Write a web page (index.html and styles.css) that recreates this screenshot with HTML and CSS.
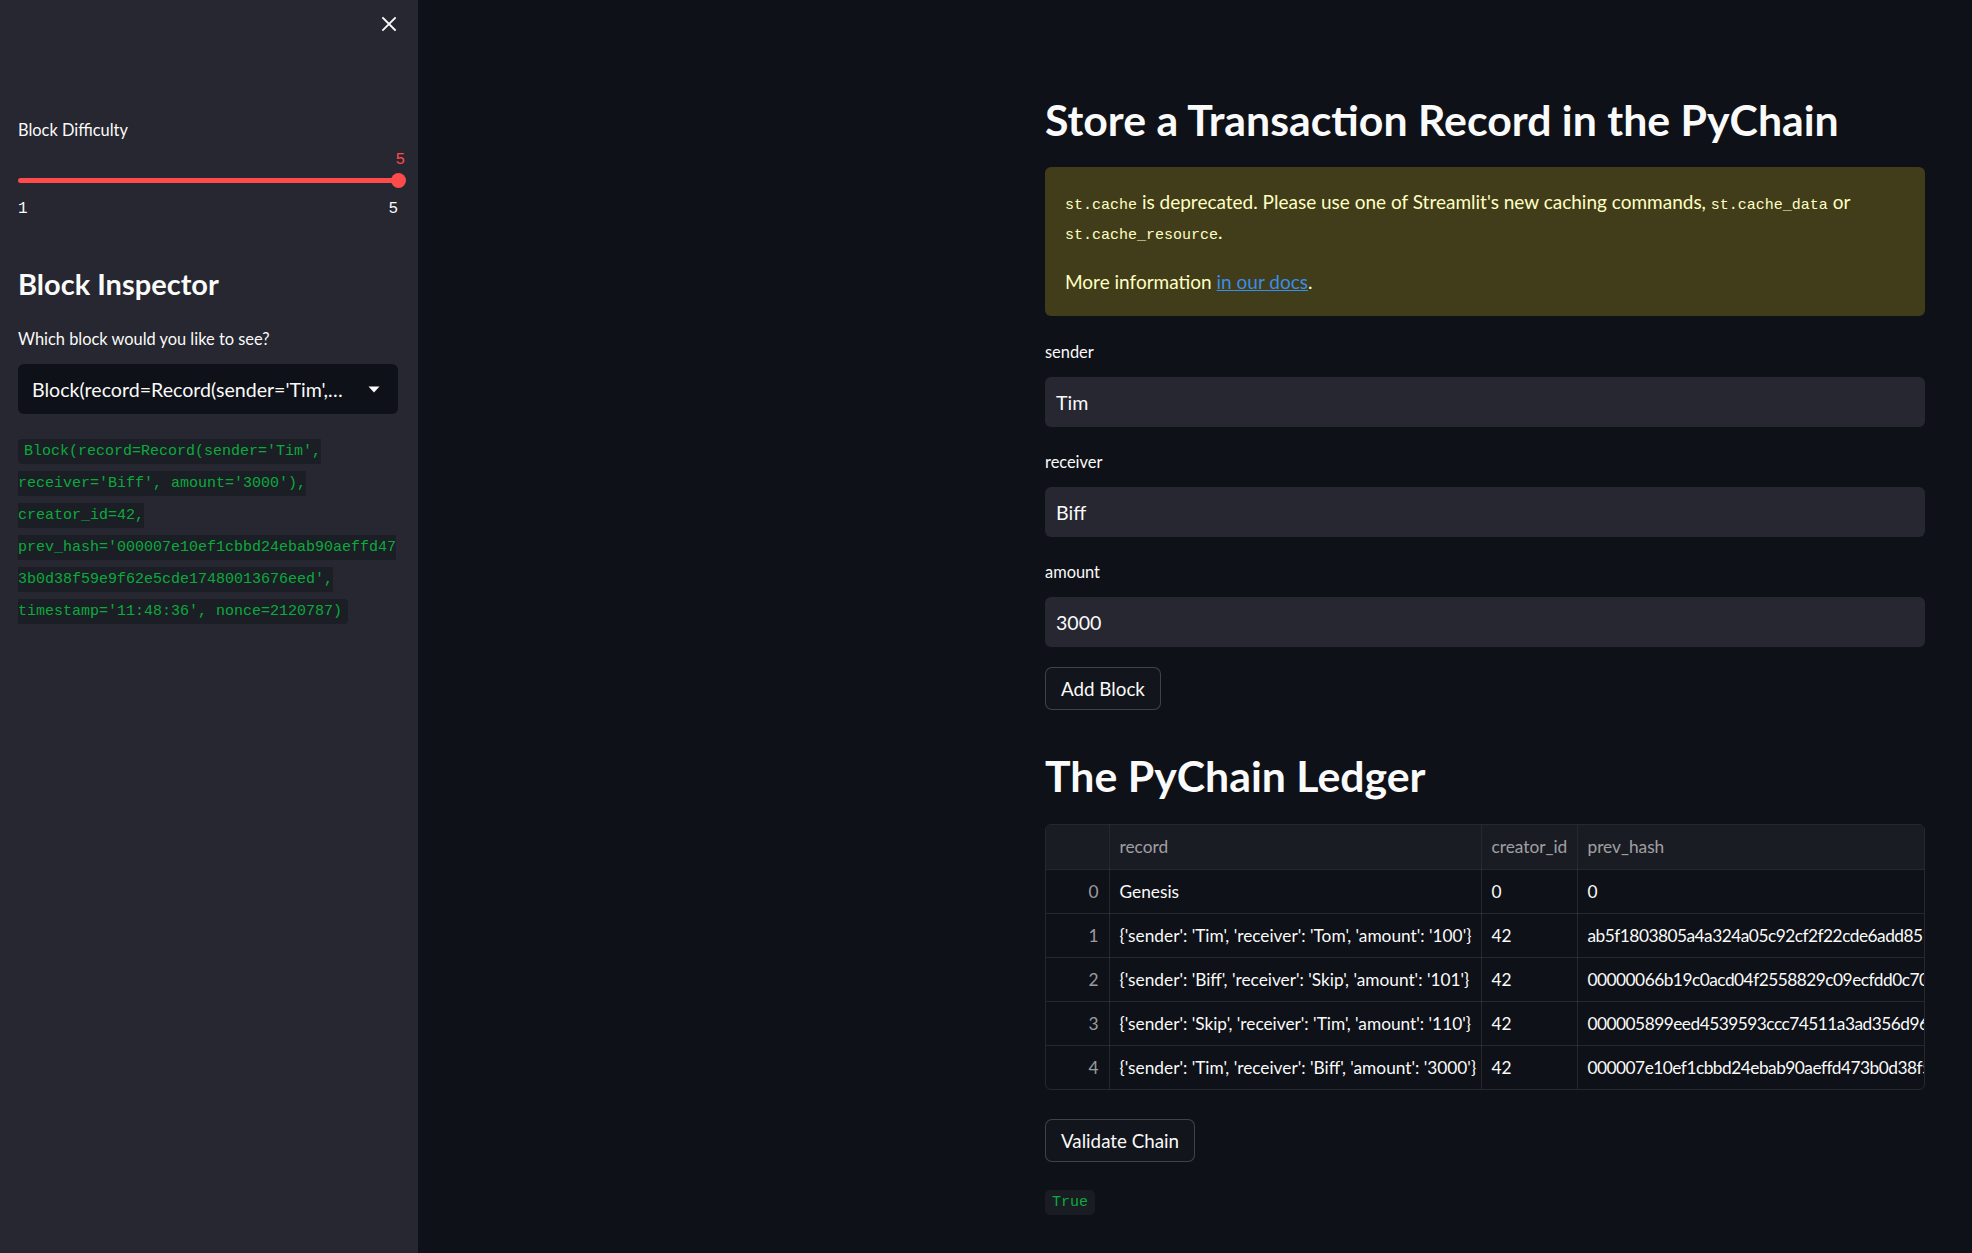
FILE: index.html
```html
<!DOCTYPE html>
<html lang="en">
<head>
<meta charset="utf-8">
<title>PyChain</title>
<link rel="stylesheet" href="styles.css">
</head>
<body>
<div class="app">
  <aside class="sidebar">
    <div class="sb-header">
      <button class="close-btn" aria-label="Close sidebar">
        <svg width="16" height="16" viewBox="0 0 16 16"><path d="M2 2 L14 14 M14 2 L2 14" stroke="#fafafa" stroke-width="1.8" stroke-linecap="square" fill="none"/></svg>
      </button>
    </div>
    <div class="sb-content">
      <div class="lbl sb-first">Block Difficulty</div>
      <div class="slider">
        <div class="slider-value">5</div>
        <div class="slider-track"><div class="slider-fill"></div><div class="slider-thumb"></div></div>
        <div class="slider-ticks"><span>1</span><span>5</span></div>
      </div>
      <h2 class="sb-heading">Block Inspector</h2>
      <div class="lbl">Which block would you like to see?</div>
      <div class="select">
        <span class="select-text">Block(record=Record(sender='Tim',…</span>
        <svg class="caret" width="12" height="7" viewBox="0 0 12 7"><path d="M0.5 0.5 L11.5 0.5 L6 6.5 Z" fill="#fafafa"/></svg>
      </div>
      <p class="code-para"><code class="inline-code">Block(record=Record(sender='Tim', receiver='Biff', amount='3000'), creator_id=42, prev_hash='000007e10ef1cbbd24ebab90aeffd473b0d38f59e9f62e5cde17480013676eed', timestamp='11:48:36', nonce=2120787)</code></p>
    </div>
  </aside>
  <main class="main">
    <div class="block">
      <h2 class="title">Store a Transaction Record in the PyChain</h2>
      <div class="alert">
        <p class="alert-p"><code class="alert-code">st.cache</code> is deprecated. Please use one of Streamlit's new caching commands, <code class="alert-code">st.cache_data</code> or <code class="alert-code">st.cache_resource</code>.</p>
        <p class="alert-p alert-last">More information <a href="#" class="link">in our docs</a>.</p>
      </div>
      <div class="lbl field-lbl">sender</div>
      <div class="input">Tim</div>
      <div class="lbl field-lbl">receiver</div>
      <div class="input">Biff</div>
      <div class="lbl field-lbl">amount</div>
      <div class="input">3000</div>
      <button class="btn btn-add">Add Block</button>
      <h2 class="title title-ledger">The PyChain Ledger</h2>
      <div class="table-wrap">
        <table class="grid">
          <colgroup><col class="c-idx"><col class="c-rec"><col class="c-cre"><col class="c-hash"></colgroup>
          <thead>
            <tr><th class="idx"></th><th>record</th><th>creator_id</th><th>prev_hash</th></tr>
          </thead>
          <tbody>
            <tr><td class="idx">0</td><td>Genesis</td><td>0</td><td>0</td></tr>
            <tr><td class="idx">1</td><td>{'sender': 'Tim', 'receiver': 'Tom', 'amount': '100'}</td><td>42</td><td class="hash">ab5f1803805a4a324a05c92cf2f22cde6add8519e3c4b2a17f0d9e6b5c3a1f78</td></tr>
            <tr><td class="idx">2</td><td>{'sender': 'Biff', 'receiver': 'Skip', 'amount': '101'}</td><td>42</td><td class="hash">00000066b19c0acd04f2558829c09ecfdd0c7018a4e2b9d3c6f15e07a8b24d91</td></tr>
            <tr><td class="idx">3</td><td>{'sender': 'Skip', 'receiver': 'Tim', 'amount': '110'}</td><td>42</td><td class="hash">000005899eed4539593ccc74511a3ad356d96883f1b7c2e09a4d6b85e3f0c217</td></tr>
            <tr><td class="idx">4</td><td>{'sender': 'Tim', 'receiver': 'Biff', 'amount': '3000'}</td><td>42</td><td class="hash">000007e10ef1cbbd24ebab90aeffd473b0d38f59e9f62e5cde17480013676eed</td></tr>
          </tbody>
        </table>
      </div>
      <button class="btn btn-validate">Validate Chain</button>
      <div class="result"><code class="true-code">True</code></div>
    </div>
  </main>
</div>
</body>
</html>
```

FILE: styles.css
```css
* { box-sizing: border-box; }
html, body { margin: 0; padding: 0; }
body {
  background: #0e1117;
  color: #fafafa;
  font-family: Lato, "Noto Sans", sans-serif;
  font-size: 20px;
}
.app {
  display: flex;
  width: 1972px;
  height: 1253px;
  overflow: hidden;
}

/* Sidebar */
.sidebar {
  width: 418px;
  flex: 0 0 418px;
  height: 1253px;
  background: #262730;
}
.sb-header {
  height: 48px;
  display: flex;
  justify-content: flex-end;
  align-items: center;
  padding-right: 21px;
}
.close-btn {
  background: none;
  border: none;
  padding: 0;
  width: 16px;
  height: 16px;
  display: flex;
}
.sb-content {
  padding: 0 20px 0 18px;
}
.lbl {
  font-size: 16.4px;
  line-height: 24px;
  color: #fafafa;
}
.sb-first { margin-top: 70px; }
.slider { position: relative; }
.slider-value {
  color: #ff4b4b;
  font-family: "Liberation Mono", monospace;
  font-size: 16px;
  line-height: 20px;
  margin-top: 8px;
  text-align: right;
  margin-right: -7px;
}
.slider-track {
  position: relative;
  height: 20px;
}
.slider-fill {
  position: absolute;
  left: 0;
  right: 0;
  top: 8px;
  height: 5px;
  border-radius: 3px;
  background: #ff4b4b;
}
.slider-thumb {
  position: absolute;
  right: -8px;
  top: 3px;
  width: 15px;
  height: 15px;
  border-radius: 50%;
  background: #ff4b4b;
}
.slider-ticks {
  display: flex;
  justify-content: space-between;
  font-family: "Liberation Mono", monospace;
  font-size: 16px;
  line-height: 20px;
  margin-top: 9px;
}
.sb-heading {
  font-size: 29px;
  font-weight: 700;
  line-height: 36px;
  margin: 47px 0 25px;
}
.select {
  margin-top: 13px;
  height: 50px;
  background: #0e1117;
  border-radius: 6px;
  display: flex;
  align-items: center;
  justify-content: space-between;
  padding: 0 18px 0 14px;
}
.select-text {
  font-size: 19.6px;
  white-space: nowrap;
}
.code-para {
  margin: 22px 0 0;
  font-family: "Liberation Mono", monospace;
  font-size: 15px;
  line-height: 32px;
  overflow-wrap: break-word;
  word-break: break-word;
}
.inline-code {
  font-family: "Liberation Mono", monospace;
  font-size: 15px;
  color: #09ab3b;
  background: #1c1e26;
  padding: 4px 6px;
  border-radius: 4px;
}

/* Main */
.main {
  flex: 1;
  display: flex;
  justify-content: flex-end;
}
.block {
  width: 880px;
  margin-right: 47px;
  padding-top: 93px;
}
.title {
  font-size: 42.8px;
  font-weight: 700;
  line-height: 54px;
  margin: 0;
  white-space: nowrap;
}
.alert {
  margin-top: 20px;
  background: #413d1a;
  border-radius: 6px;
  padding: 20px 20px 18px;
  color: #ffffc2;
}
.alert-p {
  margin: 0 0 19px;
  line-height: 30px;
  font-size: 19px;
}
.alert-last { margin-bottom: 0; line-height: 32px; }
.alert-code {
  font-family: "Liberation Mono", monospace;
  font-size: 15px;
  line-height: 1;
}
.link {
  color: #3a8ee6;
  text-decoration: underline;
}
.field-lbl { margin-top: 23px; }
.alert + .field-lbl { margin-top: 24px; }
.input {
  margin-top: 13px;
  height: 50px;
  background: #262730;
  border-radius: 6px;
  padding: 0 11px;
  display: flex;
  align-items: center;
  font-size: 19.6px;
}
.btn {
  display: block;
  background: #12151c;
  color: #fafafa;
  border: 1px solid rgba(250, 250, 250, 0.2);
  border-radius: 7px;
  height: 43px;
  padding: 0 15px;
  font-family: Lato, "Noto Sans", sans-serif;
  font-size: 18.8px;
  white-space: nowrap;
}
.btn-add { margin-top: 20px; }
.title-ledger { margin-top: 39px; }
.table-wrap {
  margin-top: 21px;
  border: 1px solid rgba(250, 250, 250, 0.1);
  border-radius: 6px;
  overflow: hidden;
}
.grid {
  width: 100%;
  table-layout: fixed;
  border-collapse: collapse;
  font-size: 17.3px;
}
.c-idx { width: 63px; }
.c-rec { width: 372px; }
.c-cre { width: 96px; }
.grid th, .grid td {
  height: 44px;
  padding: 0 10px;
  text-align: left;
  white-space: nowrap;
  overflow: hidden;
  border-right: 1px solid rgba(250, 250, 250, 0.1);
  border-bottom: 1px solid rgba(250, 250, 250, 0.1);
}
.grid th:last-child, .grid td:last-child { border-right: none; }
.grid tbody tr:last-child td { border-bottom: none; }
.grid th {
  background: #1a1c24;
  color: rgba(250, 250, 250, 0.6);
  font-weight: 400;
}
.grid td { color: #fafafa; }
.grid td.hash { letter-spacing: -0.5px; }
.grid td.idx {
  text-align: right;
  color: rgba(250, 250, 250, 0.6);
}
.btn-validate { margin-top: 29px; }
.result { margin-top: 24px; line-height: 25px; height: 25px; }
.true-code {
  display: inline-block;
  font-family: "Liberation Mono", monospace;
  font-size: 15px;
  line-height: 25px;
  color: #09ab3b;
  background: #1a1c23;
  padding: 0 7px;
  border-radius: 5px;
}
```
